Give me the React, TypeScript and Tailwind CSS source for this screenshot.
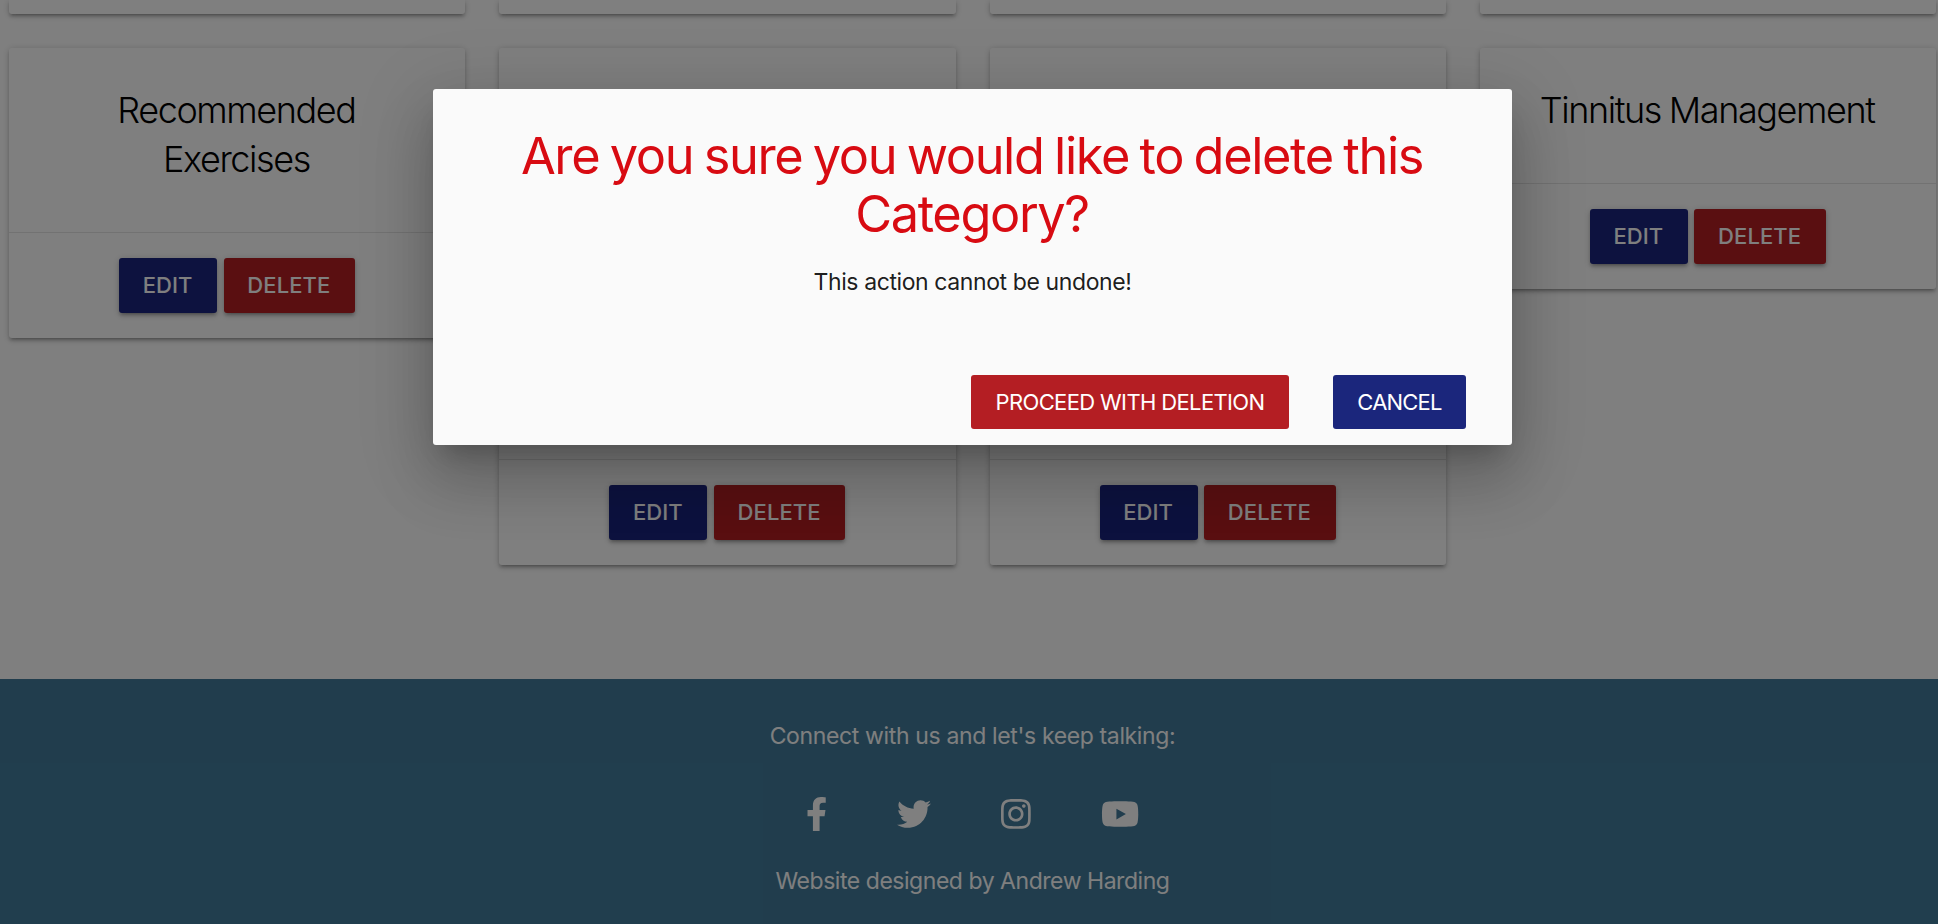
import { FaFacebookF, FaInstagram, FaTwitter, FaYoutube } from 'react-icons/fa';

const cardShadow =
  'shadow-[0_3px_3px_rgba(0,0,0,0.14),0_4.5px_1.5px_-3px_rgba(0,0,0,0.12),0_1.5px_7.5px_rgba(0,0,0,0.2)]';

function CardButtons() {
  return (
    <div className="flex justify-center gap-[6.5px] border-t border-black/10 pt-[25px] pb-[24.5px] text-[22px] font-medium text-white">
      <button className={`h-[55px] w-[98px] rounded-[3px] bg-[#1b247e] pr-[1px] tracking-[0.1px] ${cardShadow}`}>EDIT</button>
      <button className={`h-[55px] w-[131.5px] rounded-[3px] bg-[#b41e22] pr-[1px] tracking-[0.1px] ${cardShadow}`}>DELETE</button>
    </div>
  );
}

function CategoryCard({ title, tall = false }: { title?: string; tall?: boolean }) {
  return (
    <article className={`rounded-[3px] bg-white ${cardShadow}`}>
      <div className={tall ? 'h-[411px]' : 'px-[37px] pt-[38px] pb-[48px]'}>
        {title && (
          <h2 className="pr-[1.4px] text-center text-[36px] leading-[49px] font-light tracking-[-1.4px] text-black [word-spacing:-1px]">
            {title}
          </h2>
        )}
      </div>
      <CardButtons />
    </article>
  );
}

function DeleteDialog() {
  return (
    <div
      role="dialog"
      className="absolute top-[89px] left-[433px] h-[356px] w-[1079px] rounded-[3px] bg-[#fafafa] px-[46px] pt-[37.5px] shadow-[0_37px_58px_5px_rgba(0,0,0,0.14),0_14px_70px_12px_rgba(0,0,0,0.12),0_17px_23px_-11px_rgba(0,0,0,0.2)]"
    >
      <h1 className="pr-[1px] text-center text-[50.5px] leading-[58.3px] tracking-[-1.38px] text-[#d80b12] [word-spacing:-2.3px]">
        Are you sure you would like to delete this
        <br />
        Category?
      </h1>
      <p className="mt-[22px] text-center text-[23px] leading-[34px] tracking-[-0.4px] text-black/90">
        This action cannot be undone!
      </p>
      <div className="mt-[75.5px] flex justify-end gap-[44px] text-[22px] text-white">
        <button className="h-[54.5px] w-[318px] rounded-[3px] bg-[#b41e23] pt-px tracking-[-0.63px]">
          PROCEED WITH DELETION
        </button>
        <button className="h-[54.5px] w-[133px] rounded-[3px] bg-[#1b267c] pt-px tracking-[-0.8px]">
          CANCEL
        </button>
      </div>
    </div>
  );
}

export default function App() {
  return (
    <div className="relative h-[924px] w-full overflow-hidden bg-white font-[Inter,'Liberation_Sans',sans-serif]">
      <div className="flex h-full w-[1945px] flex-col">
        <main className="h-[679px] shrink-0 px-[9px]">
          <div className="grid h-[14px] grid-cols-4 gap-x-[34px]">
            {[0, 1, 2, 3].map((i) => (
              <div key={i} className={`rounded-b-[3px] bg-white ${cardShadow}`} />
            ))}
          </div>
          <div className="mt-[34px] grid grid-cols-4 items-start gap-x-[34px]">
            <CategoryCard title="Recommended Exercises" />
            <CategoryCard tall />
            <CategoryCard tall />
            <CategoryCard title="Tinnitus Management" />
          </div>
        </main>
        <footer className="flex flex-1 flex-col items-center bg-[#427b9b] pt-[40px] text-[23px] leading-[34px] text-white">
          <p className="tracking-[-0.36px]">Connect with us and let's keep talking:</p>
          <div className="mt-[44px] flex h-[34px] items-center gap-[70px]">
            <FaFacebookF className="h-[34px] w-[21.25px]" />
            <FaTwitter className="h-[34px] w-[34px]" />
            <FaInstagram className="h-[34px] w-[29.75px]" />
            <FaYoutube className="h-[34px] w-[38.25px]" />
          </div>
          <p className="mt-[33px] tracking-[-0.46px]">Website designed by Andrew Harding</p>
        </footer>
      </div>
      <div className="absolute inset-0 bg-black/50" />
      <DeleteDialog />
    </div>
  );
}
